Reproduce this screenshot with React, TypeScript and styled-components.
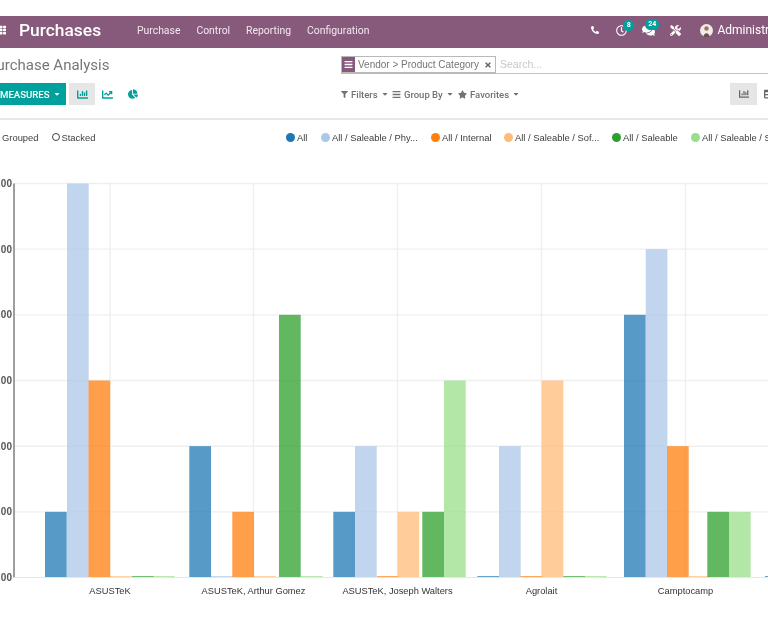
import React from "react";
import styled, { createGlobalStyle } from "styled-components";
import {
  FaBars, FaCaretDown, FaChartBar, FaChartLine, FaChartPie, FaComments, FaFilter,
  FaPhone, FaRegClock, FaStar, FaTable, FaTh, FaTimes, FaTools,
} from "react-icons/fa";

const Global = createGlobalStyle`
  html, body { margin: 0; padding: 0; background: #fff; }
  body { font-family: "Liberation Sans", Arial, sans-serif; }
`;

const Page = styled.div`
  width: 768px;
  height: 617px;
  overflow: hidden;
  background: #fff;
  padding-top: 16px;
  box-sizing: border-box;
  filter: blur(0.6px);
`;

const NavBar = styled.header`
  height: 32px;
  box-sizing: border-box;
  padding-bottom: 4px;
  background: #875a7b;
  display: flex;
  align-items: center;
  color: #fff;
  white-space: nowrap;
`;
const AppsIcon = styled(FaTh)`
  width: 10px;
  height: 10px;
  margin-left: -4px;
  flex: none;
`;
const Brand = styled.span`
  font: 500 17.4px Roboto, sans-serif;
  margin-left: 13px;
  width: 118px;
  flex: none;
`;
const MenuItem = styled.span`
  font: 400 10.4px Roboto, sans-serif;
  margin-right: 16px;
  color: #f1e9ef;
`;
const Tools = styled.div`
  display: flex;
  align-items: center;
  margin-left: 197px;
  flex: none;
`;
const ToolSlot = styled.span<{ $w: number }>`
  position: relative;
  width: ${(p) => p.$w}px;
  display: flex;
  align-items: center;
  justify-content: center;
  flex: none;
`;
const Badge = styled.span<{ $w: number; $l: number }>`
  position: absolute;
  top: -5px;
  left: ${(p) => p.$l}px;
  width: ${(p) => p.$w}px;
  height: 11px;
  border-radius: 6px;
  background: #00a09d;
  color: #fff;
  font: 700 7px/11px Roboto, sans-serif;
  text-align: center;
`;
const UserName = styled.span`
  font: 400 12px Roboto, sans-serif;
  margin-left: 3px;
`;

const Control = styled.section`
  display: grid;
  grid-template-columns: 341px 1fr;
  grid-template-rows: 35px 22px;
  height: 70px;
  border-bottom: 2px solid #e7e7e7;
`;
const Title = styled.h1`
  margin: 8px 0 0 -13px;
  font: 400 15px/18px Roboto, sans-serif;
  color: #777;
  white-space: nowrap;
`;
const SearchBar = styled.div`
  margin-top: 8px;
  height: 17px;
  display: flex;
  align-items: stretch;
  border-bottom: 1px solid #c4c4c4;
`;
const Facet = styled.div`
  display: flex;
  align-items: stretch;
  width: 155px;
  box-sizing: border-box;
  border: 1px solid #b9b9b9;
  border-bottom-width: 2px;
  margin-bottom: -1px;
  color: #757575;
  font: 400 10px/15px "Liberation Sans", sans-serif;
  white-space: nowrap;
`;
const FacetIcon = styled.span`
  width: 13px;
  background: #875a7b;
  color: #fff;
  display: flex;
  align-items: center;
  justify-content: center;
  flex: none;
`;
const FacetLabel = styled.span`
  margin-left: 3px;
  width: 126px;
  flex: none;
`;
const FacetClose = styled(FaTimes)`
  width: 8px;
  height: 8px;
  align-self: center;
  color: #666;
`;
const SearchHint = styled.span`
  margin-left: 4px;
  color: #c8c8c8;
  font: 400 10.5px/16px "Liberation Sans", sans-serif;
`;
const LeftTools = styled.div`
  display: flex;
  align-items: center;
  margin-left: -20px;
`;
const MeasuresButton = styled.button`
  width: 86px;
  height: 22px;
  border: 0;
  padding: 0 0 0 20px;
  background: #00a09d;
  color: #fff;
  font: 500 9.6px Roboto, sans-serif;
  display: flex;
  align-items: center;
  justify-content: flex-start;
  gap: 3px;
  flex: none;
`;
const ModeButton = styled.span<{ $active?: boolean; $w: number }>`
  width: ${(p) => p.$w}px;
  height: 22px;
  display: flex;
  align-items: center;
  justify-content: center;
  color: #00a09d;
  background: ${(p) => (p.$active ? "#e6e6e6" : "transparent")};
  flex: none;
`;
const FirstMode = styled(ModeButton)`
  margin-left: 3px;
`;
const RightTools = styled.div`
  display: flex;
  align-items: center;
  color: #717171;
  font: 500 9.5px Roboto, sans-serif;
  white-space: nowrap;
`;
const Drop = styled.span<{ $w: number }>`
  width: ${(p) => p.$w}px;
  display: flex;
  align-items: center;
  gap: 3px;
  flex: none;
`;
const Switcher = styled.div`
  margin-left: 200px;
  display: flex;
  align-items: center;
  color: #777;
  flex: none;
`;
const ViewButton = styled.span<{ $active?: boolean }>`
  width: 27px;
  height: 22px;
  display: flex;
  align-items: center;
  justify-content: ${(p) => (p.$active ? "center" : "flex-start")};
  padding-left: ${(p) => (p.$active ? 0 : 7)}px;
  background: ${(p) => (p.$active ? "#e6e6e6" : "transparent")};
  color: #666;
  flex: none;
`;

const OptionRow = styled.div`
  height: 34px;
  display: flex;
  align-items: center;
  color: #3d3d3d;
  font: 400 9.4px "Liberation Sans", sans-serif;
  white-space: nowrap;
`;
const RadioGroup = styled.div`
  display: flex;
  align-items: center;
  width: 286px;
  flex: none;
`;
const Radio = styled.span`
  width: 6.5px;
  height: 6.5px;
  border: 1.5px solid #444;
  border-radius: 50%;
  margin: 0 1px 0 13.5px;
  flex: none;
`;
const GroupedLabel = styled.span`
  margin-left: 2px;
`;
const LegendItem = styled.span<{ $w: number }>`
  display: flex;
  align-items: center;
  width: ${(p) => p.$w}px;
  gap: 2px;
  flex: none;
`;
const Dot = styled.span<{ $c: string }>`
  width: 9px;
  height: 9px;
  border-radius: 50%;
  background: ${(p) => p.$c};
  flex: none;
`;

const ChartWrap = styled.div`
  height: 447px;
  margin-top: 16px;
`;
const Svg = styled.svg`
  display: block;
`;

const colors = ["#1f77b4", "#aec7e8", "#ff7f0e", "#ffbb78", "#2ca02c", "#98df8a"];
const TOP = 183.5;
const UNIT = 65.67;
const BASE = 577.5;

const groups: { x: number[]; v: number[] }[] = [
  { x: [45, 67, 88.5, 110, 132, 153], v: [1, 6, 3, 0, 0, 0] },
  { x: [189.3, 211, 232.3, 254, 279, 301], v: [2, 0, 1, 0, 4, 0] },
  { x: [333.3, 355, 377, 397.5, 422.3, 444], v: [1, 2, 0, 1, 1, 3] },
  { x: [477.3, 499, 520.5, 541.7, 563.3, 585], v: [0, 2, 0, 3, 0, 0] },
  { x: [624, 645.7, 667, 688.5, 707.3, 729], v: [4, 5, 2, 0, 1, 1] },
  { x: [765, 787, 809, 831, 853, 875], v: [0, 0, 0, 0, 0, 0] },
];
const labels = [
  [110, "ASUSTeK"],
  [253.5, "ASUSTeK, Arthur Gomez"],
  [397.5, "ASUSTeK, Joseph Walters"],
  [541.5, "Agrolait"],
  [685.5, "Camptocamp"],
] as const;
const vlines = [110, 253.5, 397.5, 541.5, 685.5];

function Chart() {
  const offset = 170; // page y of the svg's top edge
  const y = (v: number) => v - offset;
  return (
    <Svg width={768} height={447} viewBox="0 0 768 447">
      {[0, 1, 2, 3, 4, 5, 6].map((i) => {
        const gy = y(TOP + i * UNIT);
        return (
          <g key={i}>
            {i < 6 && <line x1={14} x2={768} y1={gy} y2={gy} stroke="#efefef" strokeWidth={1.4} />}
            <text x={12} y={gy + 3.5} textAnchor="end" fontSize={10} fontWeight={700} fill="#555" fontFamily="Liberation Sans">
              {6 - i}.00
            </text>
          </g>
        );
      })}
      {vlines.map((x) => (
        <line key={x} x1={x} x2={x} y1={y(TOP)} y2={y(BASE)} stroke="#efefef" strokeWidth={1.4} />
      ))}
      {groups.map((g, gi) =>
        g.x.map((x, i) => {
          const v = g.v[i];
          const h = v === 0 ? 1.4 : v * UNIT;
          return (
            <rect key={`${gi}-${i}`} x={x} y={y(BASE) - h} width={21.7} height={h} fill={colors[i]} fillOpacity={0.75} />
          );
        })
      )}
      <line x1={14} x2={14} y1={y(TOP)} y2={y(BASE)} stroke="#777" strokeWidth={1.4} />
      <line x1={14} x2={768} y1={y(BASE)} y2={y(BASE)} stroke="#e6e6e6" strokeWidth={1} />
      {labels.map(([x, t]) => (
        <text key={t} x={x} y={y(594)} textAnchor="middle" fontSize={9.3} fill="#333" fontFamily="Liberation Sans">
          {t}
        </text>
      ))}
    </Svg>
  );
}

const legend: [string, string, number][] = [
  [colors[0], "All", 35],
  [colors[1], "All / Saleable / Phy...", 110],
  [colors[2], "All / Internal", 73],
  [colors[3], "All / Saleable / Sof...", 108],
  [colors[4], "All / Saleable", 79],
  [colors[5], "All / Saleable / Storable", 160],
];

export default function App() {
  return (
    <Page>
      <Global />
      <NavBar>
        <AppsIcon />
        <Brand>Purchases</Brand>
        <MenuItem>Purchase</MenuItem>
        <MenuItem>Control</MenuItem>
        <MenuItem>Reporting</MenuItem>
        <MenuItem>Configuration</MenuItem>
        <Tools>
          <ToolSlot $w={26}><FaPhone size={8} style={{ transform: "scaleX(-1)" }} /></ToolSlot>
          <ToolSlot $w={26}>
            <FaRegClock size={11} />
            <Badge $w={11} $l={15}>8</Badge>
          </ToolSlot>
          <ToolSlot $w={28}>
            <FaComments size={13} />
            <Badge $w={14} $l={11}>24</Badge>
          </ToolSlot>
          <ToolSlot $w={26}><FaTools size={11} /></ToolSlot>
          <ToolSlot $w={26}>
            <svg width="13" height="13" viewBox="0 0 13 13" style={{ marginLeft: 10 }}>
              <circle cx="6.5" cy="6.5" r="6.5" fill="#f1ece9" />
              <circle cx="6.5" cy="4.5" r="2.2" fill="#9a7360" />
              <path d="M3.5 13 C3.5 8 9.5 8 9.5 13 Z" fill="#6d4f52" />
            </svg>
          </ToolSlot>
          <UserName>Administrator</UserName>
        </Tools>
      </NavBar>
      <Control>
        <Title>Purchase Analysis</Title>
        <SearchBar>
          <Facet>
            <FacetIcon><FaBars size={9} /></FacetIcon>
            <FacetLabel>Vendor &gt; Product Category</FacetLabel>
            <FacetClose />
          </Facet>
          <SearchHint>Search...</SearchHint>
        </SearchBar>
        <LeftTools>
          <MeasuresButton>MEASURES <FaCaretDown size={8} /></MeasuresButton>
          <FirstMode $active $w={26}><FaChartBar size={11} /></FirstMode>
          <ModeButton $w={25}><FaChartLine size={11} /></ModeButton>
          <ModeButton $w={25}><FaChartPie size={10} /></ModeButton>
        </LeftTools>
        <RightTools>
          <Drop $w={51}><FaFilter size={7} />Filters <FaCaretDown size={8} /></Drop>
          <Drop $w={66}><FaBars size={9} />Group By <FaCaretDown size={8} /></Drop>
          <Drop $w={72}><FaStar size={9} />Favorites <FaCaretDown size={8} /></Drop>
          <Switcher>
            <ViewButton $active><FaChartBar size={10} /></ViewButton>
            <ViewButton><FaTable size={10} /></ViewButton>
          </Switcher>
        </RightTools>
      </Control>
      <OptionRow>
        <RadioGroup>
          <GroupedLabel>Grouped</GroupedLabel>
          <Radio />
          <span>Stacked</span>
        </RadioGroup>
        {legend.map(([c, t, w]) => (
          <LegendItem key={t} $w={w}>
            <Dot $c={c} />
            {t}
          </LegendItem>
        ))}
      </OptionRow>
      <ChartWrap>
        <Chart />
      </ChartWrap>
    </Page>
  );
}
